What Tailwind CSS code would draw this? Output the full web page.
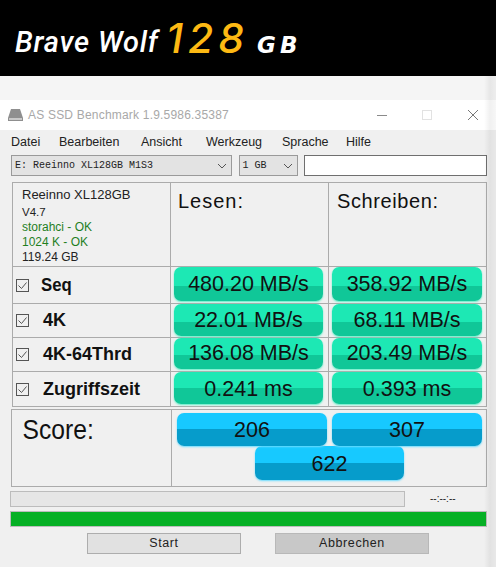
<!DOCTYPE html>
<html lang="en">
<head>
  <meta charset="UTF-8" />
  <title>AS SSD Benchmark</title>
  <script src="https://cdn.jsdelivr.net/npm/@tailwindcss/browser@4"></script>
</head>
<body class="relative w-[496px] h-[567px] overflow-hidden bg-[#f0f0f0] font-['Liberation_Sans',sans-serif] text-black">

  <!-- Banner -->
  <div class="h-[76px] bg-black flex items-end pl-[15px] pb-[18px] overflow-hidden">
    <span class="text-[29px] leading-[32px] italic font-medium text-white font-['Roboto',sans-serif] tracking-[0.8px] w-[151px] shrink-0 whitespace-nowrap">Brave Wolf</span>
    <span class="text-[41px] leading-[40px] italic text-[#fdb913] font-['Inter',sans-serif] font-medium w-[91px] shrink-0 tracking-[5px]">128</span>
    <span class="text-[23px] leading-[25px] italic font-semibold text-white font-['DejaVu_Sans',sans-serif] tracking-[4px]">GB</span>
  </div>
  <div class="h-[24px] bg-[#f5f5f5]"></div>

  <!-- Title bar -->
  <div class="h-[30px] bg-white flex items-center pl-[8px] pr-[18px]">
    <svg width="15" height="14" viewBox="0 0 15 14" class="mr-[5px]">
      <path d="M3 1h9l3 9v3H0v-3z" fill="#8f8f8f"/>
      <rect x="1" y="10" width="13" height="2" fill="#c9c9c9"/>
    </svg>
    <span class="text-[12px] text-[#a8a8a8] tracking-[0.2px] flex-1">AS SSD Benchmark 1.9.5986.35387</span>
    <svg width="101" height="12" viewBox="0 0 101 12" fill="none">
      <path d="M0 6.5h10" stroke="#8a8a8a"/>
      <rect x="45.5" y="1.5" width="9" height="9" stroke="#e2e2e2"/>
      <path d="M91 1l10 10M101 1L91 11" stroke="#777"/>
    </svg>
  </div>

  <div class="pl-[11px] pr-[9px]">
    <!-- Menu -->
    <div class="h-[25px] flex items-center text-[12.5px] text-[#222]">
      <span class="w-[48px]">Datei</span>
      <span class="w-[82px]">Bearbeiten</span>
      <span class="w-[65px]">Ansicht</span>
      <span class="w-[76px]">Werkzeug</span>
      <span class="w-[64px]">Sprache</span>
      <span>Hilfe</span>
    </div>

    <!-- Drive select -->
    <div class="h-[21px] flex">
      <div class="w-[221px] border border-[#9a9a9a] bg-[#e3e3e3] flex items-center justify-between pl-[3px] pr-[4px] font-['Liberation_Mono',monospace] text-[10px] text-[#222]">
        <span class="whitespace-pre">E: Reeinno XL128GB M1S3</span>
        <svg width="10" height="6" viewBox="0 0 10 6" fill="none"><path d="M1 1l4 4 4-4" stroke="#555"/></svg>
      </div>
      <div class="w-[60px] ml-[7px] border border-[#9a9a9a] bg-[#e3e3e3] flex items-center justify-between pl-[3px] pr-[4px] font-['Liberation_Mono',monospace] text-[10px] text-[#222]">
        <span class="whitespace-pre">1 GB</span>
        <svg width="10" height="6" viewBox="0 0 10 6" fill="none"><path d="M1 1l4 4 4-4" stroke="#555"/></svg>
      </div>
      <div class="w-[183px] ml-[6px] border border-[#6f6f6f] bg-white"></div>
    </div>

    <!-- Results table -->
    <div class="mt-[6px] ml-[1px] w-[475px] border border-[#ababab] text-[#111]">
      <div class="h-[84px] grid grid-cols-[157px_158px_1fr] border-b border-[#ababab]">
        <div class="pl-[9px] pt-[4px] text-[12px] leading-[15px] text-[#222]">
          <p class="mb-[3px] text-[13px]">Reeinno XL128GB</p>
          <p class="text-[11.5px]">V4.7</p>
          <p class="text-[#1f7f1f]">storahci - OK</p>
          <p class="text-[#1f7f1f]">1024 K - OK</p>
          <p>119.24 GB</p>
        </div>
        <div class="border-l border-[#ababab] pl-[7px] pt-[5px] text-[20px] tracking-[1px] leading-[26px]">Lesen:</div>
        <div class="border-l border-[#ababab] pl-[8px] pt-[5px] text-[20px] tracking-[0.6px] leading-[26px]">Schreiben:</div>
      </div>

      <!-- Seq -->
      <div class="h-[37px] grid grid-cols-[157px_158px_1fr] border-b border-[#ababab]">
        <div class="flex items-center pl-[3px]">
          <svg width="13" height="13" viewBox="0 0 13 13" fill="none" class="mr-[12px]"><rect x=".5" y=".5" width="12" height="12" stroke="#555"/><path d="M2.5 6.5l3 3 5-6" stroke="#555"/></svg>
          <span class="text-[18px] font-bold text-[#111] scale-x-[0.93] origin-left">Seq</span>
        </div>
        <div class="border-l border-[#ababab] pl-[3px]">
          <div class="w-[149px] h-[34px] pt-[1px] rounded-[7px] bg-[linear-gradient(#1de8b4_55%,#10c798_55%)] shadow-[0_1px_2px_#5cf0c8] flex items-center justify-center text-[21.5px]">480.20 MB/s</div>
        </div>
        <div class="border-l border-[#ababab] pl-[3px]">
          <div class="w-[150px] h-[34px] pt-[1px] rounded-[7px] bg-[linear-gradient(#1de8b4_55%,#10c798_55%)] shadow-[0_1px_2px_#5cf0c8] flex items-center justify-center text-[21.5px]">358.92 MB/s</div>
        </div>
      </div>

      <!-- 4K -->
      <div class="h-[34px] grid grid-cols-[157px_158px_1fr] border-b border-[#ababab]">
        <div class="flex items-center pl-[3px]">
          <svg width="13" height="13" viewBox="0 0 13 13" fill="none" class="mr-[14px]"><rect x=".5" y=".5" width="12" height="12" stroke="#555"/><path d="M2.5 6.5l3 3 5-6" stroke="#555"/></svg>
          <span class="text-[18px] font-bold text-[#111]">4K</span>
        </div>
        <div class="border-l border-[#ababab] pl-[3px]">
          <div class="w-[149px] h-[32px] rounded-[7px] bg-[linear-gradient(#1de8b4_55%,#10c798_55%)] shadow-[0_1px_2px_#5cf0c8] flex items-center justify-center text-[21.5px]">22.01 MB/s</div>
        </div>
        <div class="border-l border-[#ababab] pl-[3px]">
          <div class="w-[150px] h-[32px] rounded-[7px] bg-[linear-gradient(#1de8b4_55%,#10c798_55%)] shadow-[0_1px_2px_#5cf0c8] flex items-center justify-center text-[21.5px]">68.11 MB/s</div>
        </div>
      </div>

      <!-- 4K-64Thrd -->
      <div class="h-[34px] grid grid-cols-[157px_158px_1fr] border-b border-[#ababab]">
        <div class="flex items-center pl-[3px]">
          <svg width="13" height="13" viewBox="0 0 13 13" fill="none" class="mr-[14px]"><rect x=".5" y=".5" width="12" height="12" stroke="#555"/><path d="M2.5 6.5l3 3 5-6" stroke="#555"/></svg>
          <span class="text-[18px] font-bold text-[#111] whitespace-nowrap">4K-64Thrd</span>
        </div>
        <div class="border-l border-[#ababab] pl-[3px]">
          <div class="w-[149px] h-[31px] rounded-[7px] bg-[linear-gradient(#1de8b4_55%,#10c798_55%)] shadow-[0_1px_2px_#5cf0c8] flex items-center justify-center text-[21.5px]">136.08 MB/s</div>
        </div>
        <div class="border-l border-[#ababab] pl-[3px]">
          <div class="w-[150px] h-[31px] rounded-[7px] bg-[linear-gradient(#1de8b4_55%,#10c798_55%)] shadow-[0_1px_2px_#5cf0c8] flex items-center justify-center text-[21.5px]">203.49 MB/s</div>
        </div>
      </div>

      <!-- Zugriffszeit -->
      <div class="h-[34px] grid grid-cols-[157px_158px_1fr]">
        <div class="flex items-center pl-[3px]">
          <svg width="13" height="13" viewBox="0 0 13 13" fill="none" class="mr-[14px]"><rect x=".5" y=".5" width="12" height="12" stroke="#555"/><path d="M2.5 6.5l3 3 5-6" stroke="#555"/></svg>
          <span class="text-[18px] font-bold text-[#111] whitespace-nowrap">Zugriffszeit</span>
        </div>
        <div class="border-l border-[#ababab] pl-[3px]">
          <div class="w-[149px] h-[32px] pt-[2px] rounded-[7px] bg-[linear-gradient(#1de8b4_50%,#10c798_50%)] shadow-[0_1px_2px_#5cf0c8] flex items-center justify-center text-[21.5px]">0.241 ms</div>
        </div>
        <div class="border-l border-[#ababab] pl-[3px]">
          <div class="w-[150px] h-[32px] pt-[2px] rounded-[7px] bg-[linear-gradient(#1de8b4_50%,#10c798_50%)] shadow-[0_1px_2px_#5cf0c8] flex items-center justify-center text-[21.5px]">0.393 ms</div>
        </div>
      </div>
    </div>

    <!-- Score -->
    <div class="mt-[2px] w-[476px] h-[78px] border border-[#ababab] grid grid-cols-[159px_1fr] text-[#111]">
      <div class="pl-[12px] pt-[3px] text-[28px] leading-[34px] scale-x-[0.88] origin-left">Score:</div>
      <div class="border-l border-[#ababab] pl-[5px] pt-[3px]">
        <div class="flex gap-[5px]">
          <div class="w-[150px] h-[33px] pt-[1px] rounded-[7px] bg-[linear-gradient(#17c9ff_50%,#069ccb_50%)] shadow-[0_1px_2px_#6bdcff] flex items-center justify-center text-[21.5px]">206</div>
          <div class="w-[150px] h-[33px] pt-[1px] rounded-[7px] bg-[linear-gradient(#17c9ff_50%,#069ccb_50%)] shadow-[0_1px_2px_#6bdcff] flex items-center justify-center text-[21.5px]">307</div>
        </div>
        <div class="ml-[78px] w-[149px] h-[34px] pt-[2px] rounded-[7px] bg-[linear-gradient(#17c9ff_50%,#069ccb_50%)] shadow-[0_1px_2px_#6bdcff] flex items-center justify-center text-[21.5px]">622</div>
      </div>
    </div>

    <!-- Progress -->
    <div class="mt-[3px] -ml-[1px] flex items-center h-[17px]">
      <div class="w-[395px] h-[16px] bg-[#e6e6e6] border border-[#bcbcbc]"></div>
      <span class="ml-[25px] text-[10px] text-[#222]">--:--:--</span>
    </div>
    <div class="mt-[4px] -ml-[1px] w-[477px] h-[16px] bg-[#06b025] border border-[#bcbcbc]"></div>

    <!-- Buttons -->
    <div class="mt-[6px] flex text-[12.5px] tracking-[0.6px] text-[#222]">
      <div class="ml-[76px] w-[154px] h-[21px] bg-[#e1e1e1] border border-[#adadad] flex items-center justify-center">Start</div>
      <div class="ml-[34px] w-[154px] h-[21px] bg-[#c8c8c8] border border-[#b8b8b8] flex items-center justify-center">Abbrechen</div>
    </div>
  </div>

  <!-- window shadow on the right edge -->
  <div class="absolute right-0 top-[76px] bottom-0 w-[12px] bg-[linear-gradient(to_right,transparent,rgba(0,0,0,0.06)_50%,rgba(0,0,0,0.03))]"></div>
</body>
</html>
